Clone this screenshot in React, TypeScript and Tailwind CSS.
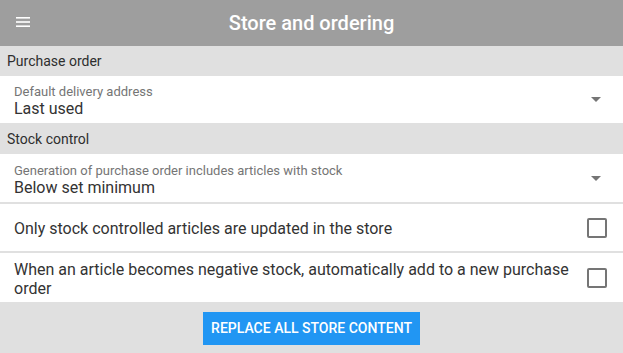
import React from "react";

function Arrow() {
  return (
    <svg width="10" height="5" viewBox="0 0 10 5" className="shrink-0">
      <path d="M0 0 L10 0 L5 5 Z" fill="#757575" />
    </svg>
  );
}

function Check() {
  return <div className="w-[20px] h-[20px] border-2 border-[#757575] rounded-[2px] shrink-0 bg-white" />;
}

function SelectRow({ label, value, h }: { label: string; value: string; h: string }) {
  return (
    <div className={`bg-white flex items-center pl-[14px] pr-[22px] ${h}`}>
      <div className="flex-1 flex flex-col pt-[4px]">
        <span className="text-[13px] leading-[15px] text-[#757575]">{label}</span>
        <span className="text-[16px] leading-[20px] text-[#333333]">{value}</span>
      </div>
      <Arrow />
    </div>
  );
}

function CheckRow({ text, h }: { text: string; h: string }) {
  return (
    <div className={`bg-white flex items-center pl-[14px] pr-[16px] ${h}`}>
      <div className="flex-1 pr-[18px] pt-[2px] text-[16px] leading-[19px] text-[#333333]">{text}</div>
      <Check />
    </div>
  );
}

function Section({ title, h }: { title: string; h: string }) {
  return (
    <div className={`bg-[#e0e0e0] flex items-center px-[7px] pt-[1px] text-[14px] font-normal text-[#2e2e2e] ${h}`}>
      {title}
    </div>
  );
}

export default function App() {
  return (
    <div className="w-[623px] h-[353px] bg-[#e0e0e0] flex flex-col overflow-hidden" style={{ fontFamily: "Roboto, 'Liberation Sans', sans-serif" }}>
      <div className="bg-[#9e9e9e] h-[46px] flex items-center relative shrink-0">
        <svg width="14" height="10" viewBox="0 0 14 10" className="absolute left-[16px] top-[17px]">
          <rect x="0" y="0" width="14" height="1.6" fill="white" />
          <rect x="0" y="4.2" width="14" height="1.6" fill="white" />
          <rect x="0" y="8.4" width="14" height="1.6" fill="white" />
        </svg>
        <div className="flex-1 text-center text-white text-[20px] font-medium">Store and ordering</div>
      </div>
      <Section title="Purchase order" h="h-[30px]" />
      <SelectRow label="Default delivery address" value="Last used" h="h-[47px]" />
      <Section title="Stock control" h="h-[31px]" />
      <SelectRow label="Generation of purchase order includes articles with stock" value="Below set minimum" h="h-[48px]" />
      <div className="h-[2px] shrink-0" />
      <CheckRow text="Only stock controlled articles are updated in the store" h="h-[47px]" />
      <div className="h-[2px] shrink-0" />
      <CheckRow text="When an article becomes negative stock, automatically add to a new purchase order" h="h-[49px]" />
      <div className="flex justify-center pt-[10px]">
        <button className="bg-[#2196f3] text-white text-[14px] font-medium uppercase w-[217px] h-[33px]">
          Replace all store content
        </button>
      </div>
    </div>
  );
}
